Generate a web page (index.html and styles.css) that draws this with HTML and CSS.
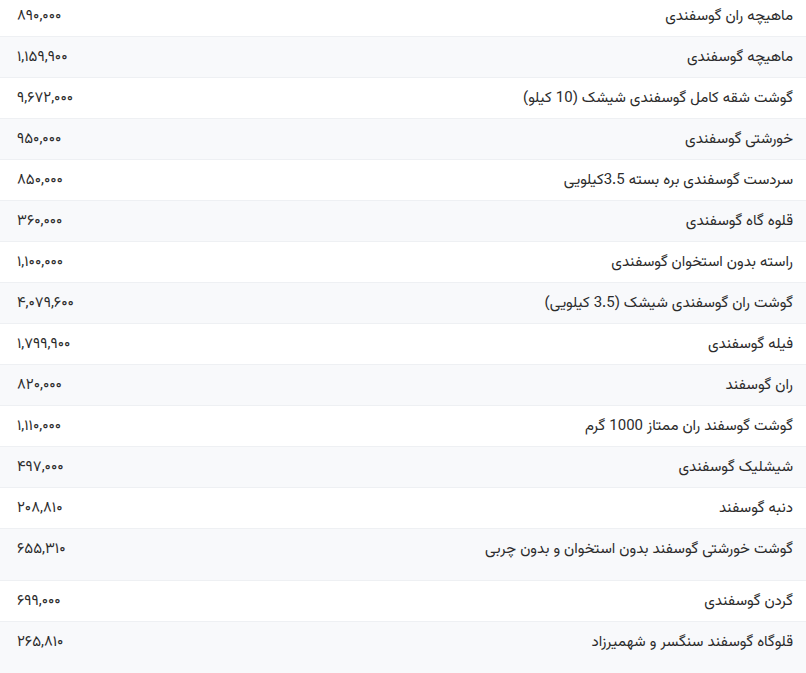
FILE: index.html
```html
<!DOCTYPE html>
<html lang="fa" dir="rtl">
<head>
<meta charset="utf-8">
<title>قیمت گوشت گوسفندی</title>
<link rel="stylesheet" href="styles.css">
</head>
<body>
<table class="price-table">
<tbody>
<tr><td class="name">ماهیچه ران گوسفندی</td><td class="price" dir="ltr">۸۹۰,۰۰۰</td></tr>
<tr><td class="name">ماهیچه گوسفندی</td><td class="price" dir="ltr">۱,۱۵۹,۹۰۰</td></tr>
<tr><td class="name">گوشت شقه کامل گوسفندی شیشک (10 کیلو)</td><td class="price" dir="ltr">۹,۶۷۲,۰۰۰</td></tr>
<tr><td class="name">خورشتی گوسفندی</td><td class="price" dir="ltr">۹۵۰,۰۰۰</td></tr>
<tr><td class="name">سردست گوسفندی بره بسته 3.5کیلویی</td><td class="price" dir="ltr">۸۵۰,۰۰۰</td></tr>
<tr><td class="name">قلوه گاه گوسفندی</td><td class="price" dir="ltr">۳۶۰,۰۰۰</td></tr>
<tr><td class="name">راسته بدون استخوان گوسفندی</td><td class="price" dir="ltr">۱,۱۰۰,۰۰۰</td></tr>
<tr><td class="name">گوشت ران گوسفندی شیشک (3.5 کیلویی)</td><td class="price" dir="ltr">۴,۰۷۹,۶۰۰</td></tr>
<tr><td class="name">فیله گوسفندی</td><td class="price" dir="ltr">۱,۷۹۹,۹۰۰</td></tr>
<tr><td class="name">ران گوسفند</td><td class="price" dir="ltr">۸۲۰,۰۰۰</td></tr>
<tr><td class="name">گوشت گوسفند ران ممتاز 1000 گرم</td><td class="price" dir="ltr">۱,۱۱۰,۰۰۰</td></tr>
<tr><td class="name">شیشلیک گوسفندی</td><td class="price" dir="ltr">۴۹۷,۰۰۰</td></tr>
<tr><td class="name">دنبه گوسفند</td><td class="price" dir="ltr">۲۰۸,۸۱۰</td></tr>
<tr class="tall"><td class="name">گوشت خورشتی گوسفند بدون استخوان و بدون چربی</td><td class="price" dir="ltr">۶۵۵,۳۱۰</td></tr>
<tr><td class="name">گردن گوسفندی</td><td class="price" dir="ltr">۶۹۹,۰۰۰</td></tr>
<tr class="tall"><td class="name">قلوگاه گوسفند سنگسر و شهمیرزاد</td><td class="price" dir="ltr">۲۶۵,۸۱۰</td></tr>
</tbody>
</table>
</body>
</html>
```

FILE: styles.css
```css
html, body {
  margin: 0;
  padding: 0;
  background: #ffffff;
}
body {
  font-family: "Vazirmatn", "Vazir", "Noto Sans Arabic", "DejaVu Sans", sans-serif;
  color: #2b2b2b;
  font-size: 15px;
}
.price-table {
  width: 100%;
  border-collapse: collapse;
  margin-top: -4px;
}
.price-table tr {
  border-top: 1px solid #eef0f3;
}
.price-table tr:first-child {
  border-top: none;
}
.price-table tr:nth-child(even) {
  background: #f8f9fb;
}
.price-table td {
  padding: 12px 13px 11px;
  height: 17px;
  line-height: 17px;
  vertical-align: top;
}
.price-table tr.tall td {
  padding-bottom: 22px;
}
.price-table .name {
  text-align: right;
}
.price-table .price {
  text-align: left;
  padding-left: 17px;
  width: 200px;
}
```
